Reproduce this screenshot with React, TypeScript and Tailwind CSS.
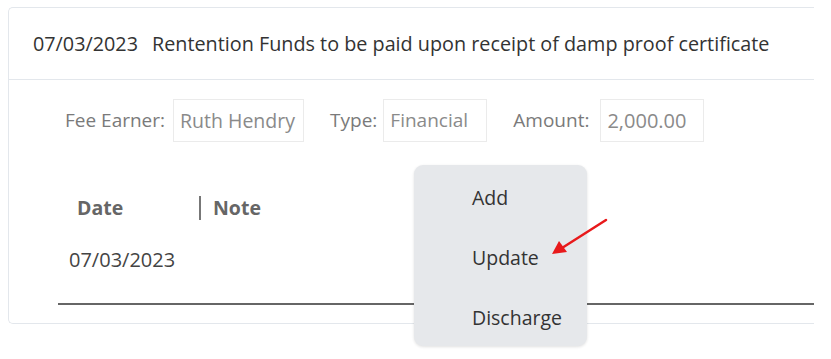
import React from 'react';

export default function App() {
    return (
        <div className="relative h-[359px] w-[831px] overflow-hidden bg-white" style={{ fontFamily: '"Open Sans", sans-serif' }}>
            {/* Card */}
            <div className="ml-2 mt-[7px] h-[317px] w-[806px] rounded-l-[5px] border border-r-0 border-[#e3e7ec]">
                {/* Header */}
                <div className="flex h-[72px] items-center whitespace-nowrap border-b border-[#e3e7ec] pl-6 text-[19.8px] text-[#333]">
                    <span>07/03/2023</span>
                    <span className="ml-[14px]">Rentention Funds to be paid upon receipt of damp proof certificate</span>
                </div>

                {/* Fields */}
                <div className="flex items-center whitespace-nowrap pl-14 pt-[19px] text-[19px]">
                    <span className="text-[#7a7a7a]">Fee Earner:</span>
                    <span className="ml-2 flex h-[43px] w-[131px] shrink-0 items-center border border-[#ebebeb] px-[6px] text-[19.5px] text-[#8a8a8a]">Ruth Hendry</span>
                    <span className="ml-[26px] text-[#7a7a7a]">Type:</span>
                    <span className="ml-[6px] flex h-[43px] w-[104px] shrink-0 items-center border border-[#ebebeb] px-[6px] text-[19px] text-[#8a8a8a]">Financial</span>
                    <span className="ml-[26px] text-[#7a7a7a]">Amount:</span>
                    <span className="ml-[11px] flex h-[43px] w-[104px] shrink-0 items-center border border-[#ebebeb] px-[6px] text-[20px] text-[#8a8a8a]">2,000.00</span>
                </div>

                {/* Table */}
                <div className="ml-12 mt-[54px]">
                    <div className="flex items-center pl-5 text-[19.5px] font-bold leading-[24px] text-[#666]">
                        <span className="w-[122px]">Date</span>
                        <span className="h-[24px] w-[2px] bg-[#777]" />
                        <span className="ml-3">Note</span>
                    </div>
                    <div className="mt-[28px] pl-3 text-[20px] leading-[24px] text-[#444]">07/03/2023</div>
                    <div className="ml-[1px] mt-[31px] h-[2px] bg-[#666]" />
                </div>
            </div>

            {/* Context menu */}
            <div className="absolute left-[414px] top-[165px] flex h-[181px] w-[173px] flex-col rounded-[9px] bg-[#e6e8eb] pl-[58px] pt-[20px] text-[19.5px] text-[#333] shadow-[0_1px_3px_rgba(0,0,0,0.12)]">
                <span className="leading-[26px]">Add</span>
                <span className="mt-[34px] leading-[26px]">Update</span>
                <span className="mt-[34px] leading-[26px]">Discharge</span>
            </div>

            {/* Red arrow annotation */}
            <svg className="absolute left-0 top-0" width="831" height="359">
                <line x1="606" y1="220" x2="562" y2="248" stroke="#e8191b" strokeWidth="2.5" strokeLinecap="round" />
                <polygon points="552,254 559,241 567,252" fill="#e8191b" />
            </svg>
        </div>
    );
}
